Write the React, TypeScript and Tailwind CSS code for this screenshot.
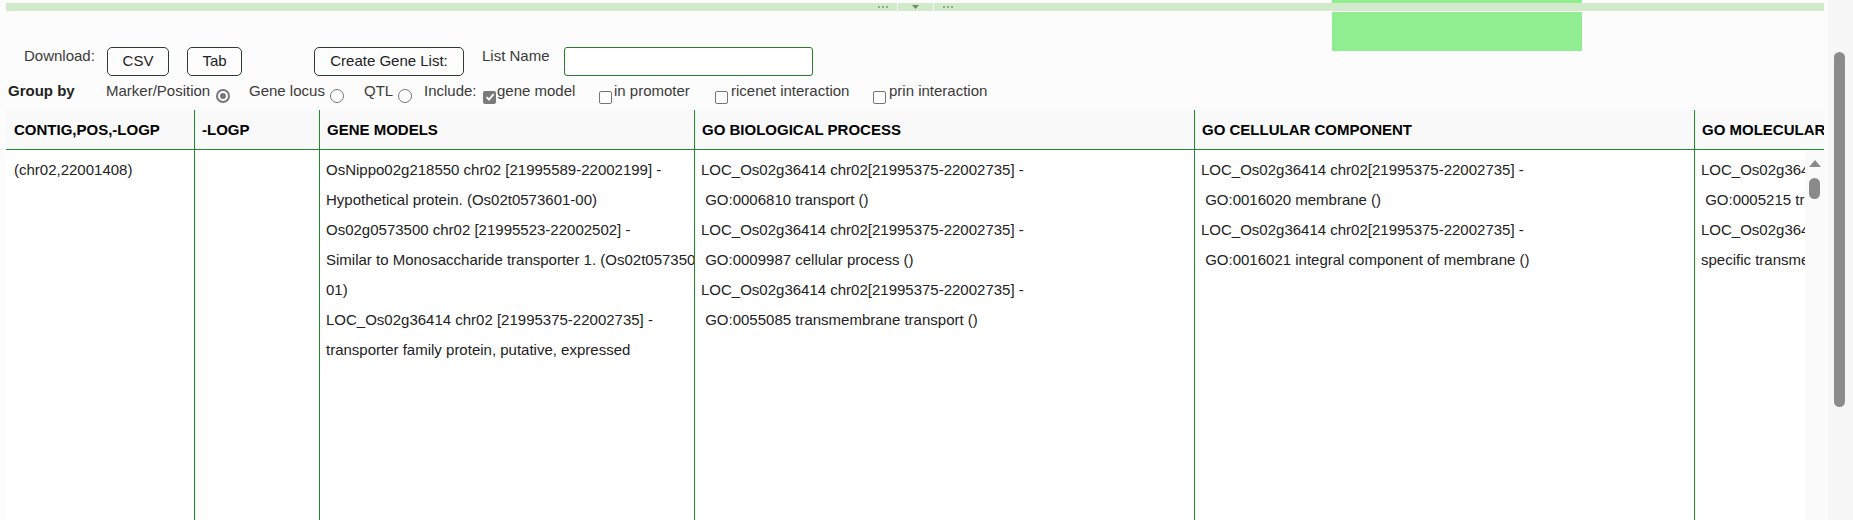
import React from "react";

const GREEN = "border-[#1e8c2e]";

type Column = { title: string; width: string; bodyWidth: string; lines: string[] };

const columns: Column[] = [
  { title: "CONTIG,POS,-LOGP", width: "w-[188px]", bodyWidth: "w-[188px]", lines: ["(chr02,22001408)"] },
  { title: "-LOGP", width: "w-[125px]", bodyWidth: "w-[125px]", lines: [] },
  {
    title: "GENE MODELS",
    width: "w-[375px]",
    bodyWidth: "w-[375px]",
    lines: [
      "OsNippo02g218550 chr02 [21995589-22002199] -",
      "Hypothetical protein. (Os02t0573601-00)",
      "Os02g0573500 chr02 [21995523-22002502] -",
      "Similar to Monosaccharide transporter 1. (Os02t0573500-",
      "01)",
      "LOC_Os02g36414 chr02 [21995375-22002735] -",
      "transporter family protein, putative, expressed",
    ],
  },
  {
    title: "GO BIOLOGICAL PROCESS",
    width: "w-[500px]",
    bodyWidth: "w-[500px]",
    lines: [
      "LOC_Os02g36414 chr02[21995375-22002735] -",
      "\u00a0GO:0006810 transport ()",
      "LOC_Os02g36414 chr02[21995375-22002735] -",
      "\u00a0GO:0009987 cellular process ()",
      "LOC_Os02g36414 chr02[21995375-22002735] -",
      "\u00a0GO:0055085 transmembrane transport ()",
    ],
  },
  {
    title: "GO CELLULAR COMPONENT",
    width: "w-[500px]",
    bodyWidth: "w-[500px]",
    lines: [
      "LOC_Os02g36414 chr02[21995375-22002735] -",
      "\u00a0GO:0016020 membrane ()",
      "LOC_Os02g36414 chr02[21995375-22002735] -",
      "\u00a0GO:0016021 integral component of membrane ()",
    ],
  },
  {
    title: "GO MOLECULAR FUNCTION",
    width: "w-[130px]",
    bodyWidth: "w-[111px]",
    lines: [
      "LOC_Os02g36414 chr02[21995375-22002735] -",
      "\u00a0GO:0005215 transporter activity ()",
      "LOC_Os02g36414 chr02[21995375-22002735] -",
      "specific transmembrane transporter activity ()",
    ],
  },
];

function Radio({ checked }: { checked?: boolean }) {
  return (
    <span
      className={`flex h-[14px] w-[14px] items-center justify-center rounded-full border bg-white ${
        checked ? "border-[2px] border-[#777]" : "border-[#767676]"
      }`}
    >
      {checked ? <span className="h-[6px] w-[6px] rounded-full bg-[#777]" /> : null}
    </span>
  );
}

function Checkbox({ checked }: { checked?: boolean }) {
  if (checked) {
    return (
      <span className="flex h-[13px] w-[13px] items-center justify-center rounded-[2px] bg-[#7a7a7a]">
        <svg width="10" height="10" viewBox="0 0 10 10">
          <path d="M1.6 5.2 L4 7.6 L8.6 2.2" fill="none" stroke="white" strokeWidth="1.8" />
        </svg>
      </span>
    );
  }
  return <span className="h-[13px] w-[13px] rounded-[2px] border border-[#767676] bg-white" />;
}

function Dots() {
  return (
    <span className="flex gap-[2px]">
      <span className="h-[2px] w-[2px] bg-[#8fae8a]" />
      <span className="h-[2px] w-[2px] bg-[#8fae8a]" />
      <span className="h-[2px] w-[2px] bg-[#8fae8a]" />
    </span>
  );
}

const btn =
  "flex h-[29px] items-center justify-center rounded-[5px] border border-[#2f3b2f] bg-[#fdfdfd] text-[15px] text-[#222]";

export default function App() {
  return (
    <div className="flex h-[520px] w-full overflow-hidden bg-[#fcfcfc] font-['Liberation_Sans',Arial,sans-serif] text-[15px] text-[#222]">
      <div className="relative flex min-w-0 flex-1 flex-col pl-[6px] pr-[4px]">
        {/* green marker box under the splitter bar */}
        <div className="absolute left-[1332px] top-0 h-[51px] w-[250px] bg-[#90ee90]" />

        <div className="relative z-10 mt-[3px] flex h-[9px] items-center justify-center border-b border-white bg-[#d1ebca]">
          <div className="flex h-[8px] items-center">
            <div className="flex w-[36px] justify-end pr-[9px]">
              <Dots />
            </div>
            <div className="h-[8px] w-[1px] bg-white" />
            <div className="flex w-[35px] justify-center">
              <svg width="7" height="4" viewBox="0 0 7 4">
                <path d="M0 0 H7 L3.5 4 Z" fill="#6e8e69" />
              </svg>
            </div>
            <div className="h-[8px] w-[1px] bg-white" />
            <div className="flex w-[36px] pl-[9px]">
              <Dots />
            </div>
          </div>
        </div>

        <div className="relative mt-[35px] flex h-[29px] items-start">
          <span className="ml-[18px] w-[83px] leading-[18px] text-[#3a3a3a]">Download:</span>
          <button type="button" className={`${btn} w-[62px]`}>
            CSV
          </button>
          <button type="button" className={`${btn} ml-[18px] w-[55px]`}>
            Tab
          </button>
          <button type="button" className={`${btn} ml-[72px] w-[150px]`}>
            Create Gene List:
          </button>
          <span className="ml-[18px] w-[82px] leading-[18px] text-[#3a3a3a]">List Name</span>
          <input
            type="text"
            className="h-[29px] w-[249px] rounded-[3px] border border-[#2a7a2a] bg-white outline-none"
          />
        </div>

        <div className="mt-[5px] flex h-[20px] items-center leading-[20px] text-[#3a3a3a]">
          <span className="ml-[2px] w-[98px] font-bold text-[#222]">Group by</span>
          <span className="w-[108px]">Marker/Position</span>
          <span className="flex w-[35px] translate-y-[5px] pl-[2px]">
            <Radio checked />
          </span>
          <span className="w-[79px]">Gene locus</span>
          <span className="flex w-[36px] translate-y-[5px] pl-[2px]">
            <Radio />
          </span>
          <span className="w-[32px]">QTL</span>
          <span className="flex w-[28px] translate-y-[5px] pl-[2px]">
            <Radio />
          </span>
          <span className="w-[58px]">Include:</span>
          <span className="flex w-[15px] translate-y-[6px] pl-[1px]">
            <Checkbox checked />
          </span>
          <span className="w-[100px]">gene model</span>
          <span className="flex w-[17px] translate-y-[6px] pl-[2px]">
            <Checkbox />
          </span>
          <span className="w-[99px]">in promoter</span>
          <span className="flex w-[18px] translate-y-[6px] pl-[2px]">
            <Checkbox />
          </span>
          <span className="w-[140px]">ricenet interaction</span>
          <span className="flex w-[18px] translate-y-[6px] pl-[2px]">
            <Checkbox />
          </span>
          <span>prin interaction</span>
        </div>

        <div className="mt-[9px] flex min-h-0 flex-1 flex-col">
          <div className={`flex h-[40px] border-b ${GREEN} bg-[#f9f9f9]`}>
            {columns.map((c, i) => (
              <div
                key={c.title}
                className={`${c.width} shrink-0 overflow-hidden whitespace-nowrap font-bold leading-[39px] text-black ${
                  i === 0 ? "pl-[8px]" : `border-l ${GREEN} pl-[7px]`
                }`}
              >
                {c.title}
              </div>
            ))}
          </div>
          <div className="flex min-h-0 flex-1 bg-white">
            {columns.map((c, i) => (
              <div
                key={c.title}
                className={`${c.bodyWidth} shrink-0 overflow-hidden whitespace-nowrap pt-[5px] leading-[30px] ${
                  i === 0 ? "pl-[8px]" : `border-l ${GREEN} pl-[6px]`
                }`}
              >
                {c.lines.map((l, j) => (
                  <div key={j}>{l}</div>
                ))}
              </div>
            ))}
            <div className="flex w-[19px] shrink-0 flex-col items-center bg-[#fafafa] pt-[10px]">
              <svg width="12" height="7" viewBox="0 0 12 7">
                <path d="M6 0 L12 7 H0 Z" fill="#8a8a8a" />
              </svg>
              <div className="mt-[11px] h-[21px] w-[11px] rounded-full bg-[#8a8a8a]" />
            </div>
          </div>
        </div>
      </div>

      <div className="w-[25px] shrink-0 bg-[#f7f7f7] pl-[6px] pt-[52px]">
        <div className="h-[355px] w-[11px] rounded-full bg-[#8c8c8c]" />
      </div>
    </div>
  );
}
